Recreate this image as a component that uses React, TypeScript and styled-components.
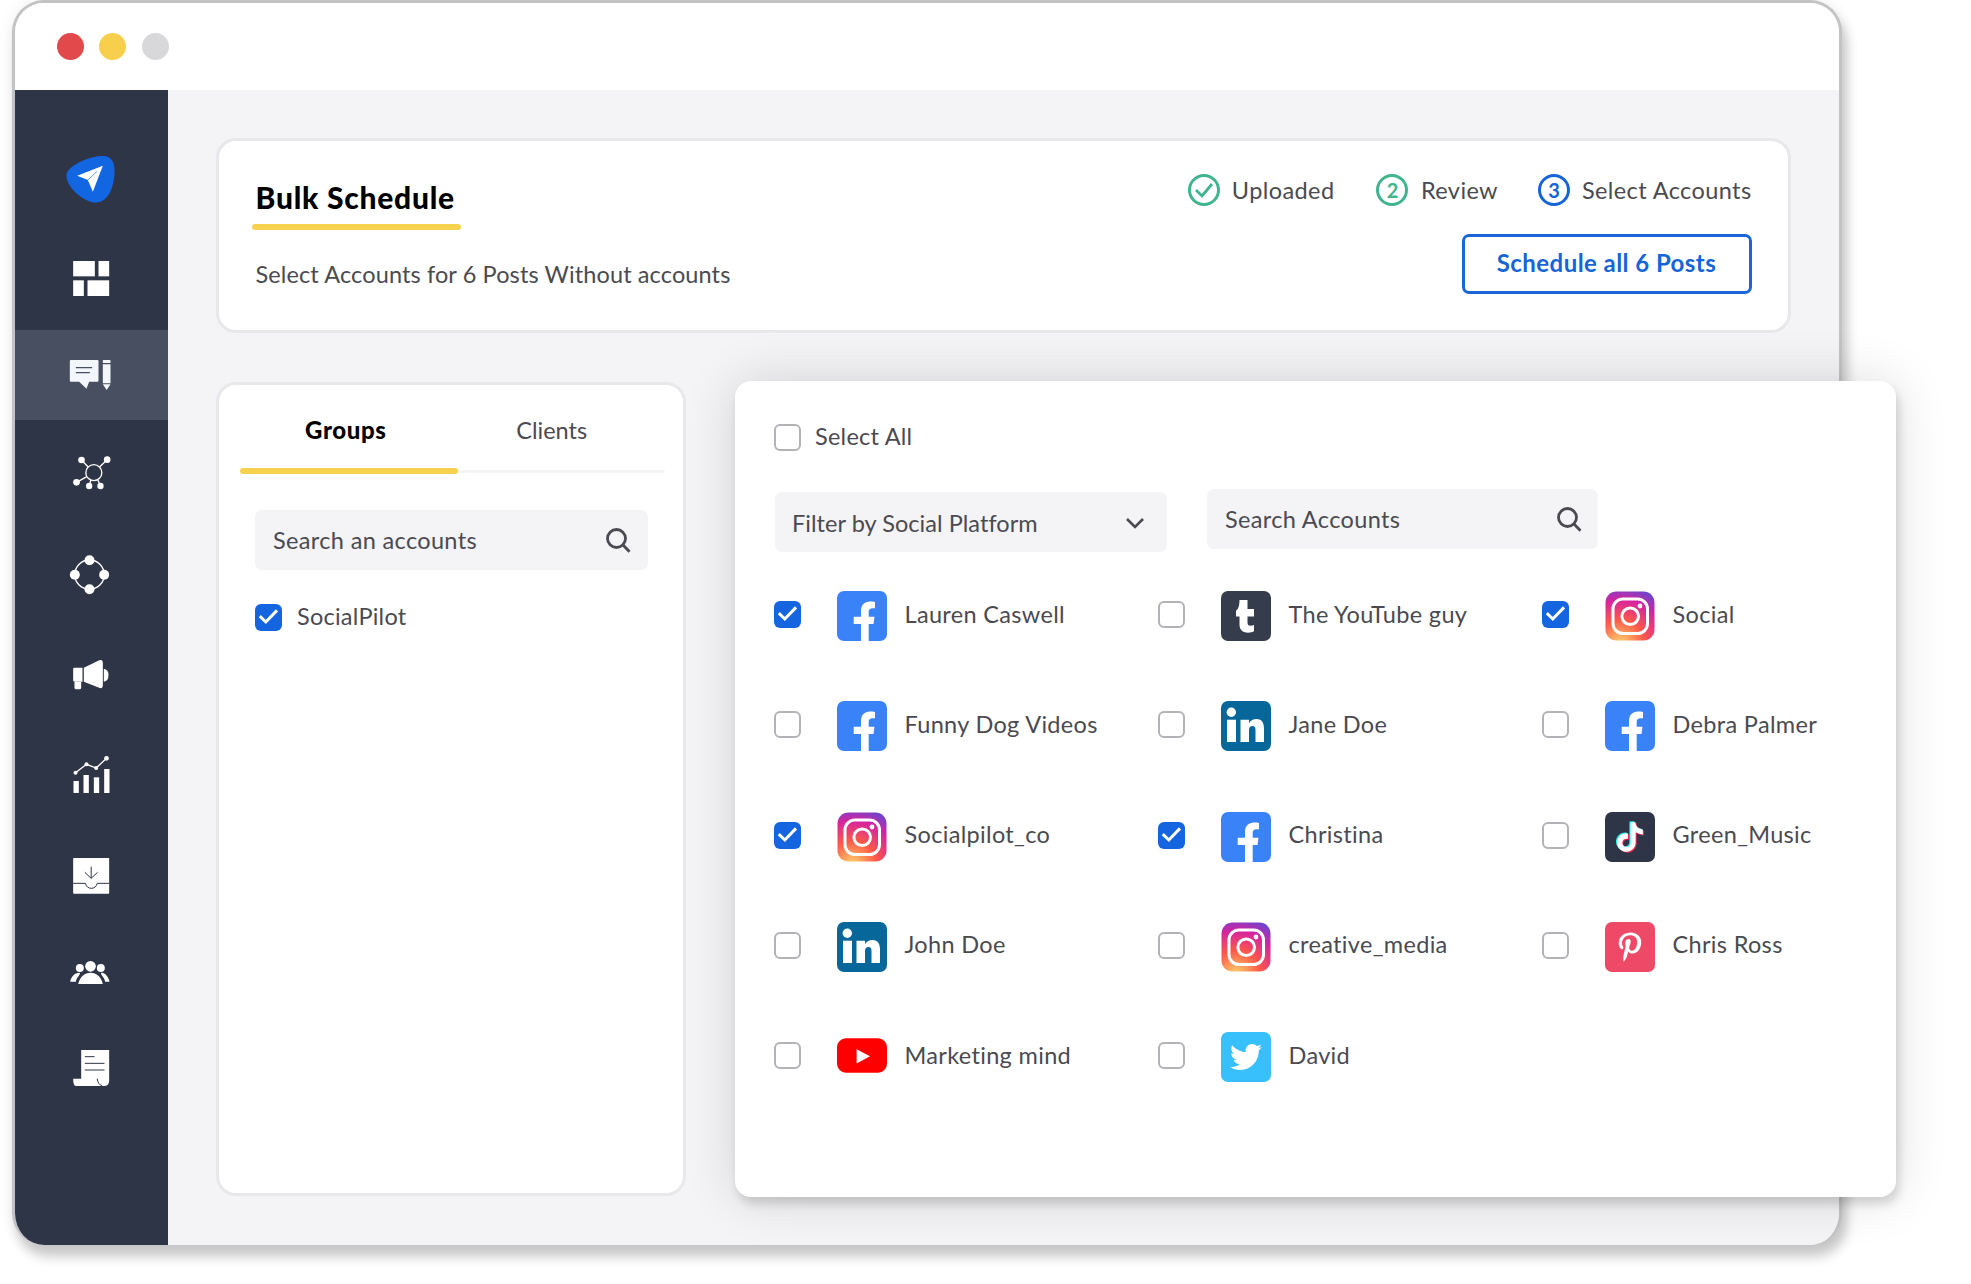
import React, { useId } from "react";
import styled, { createGlobalStyle } from "styled-components";
import { FaTwitter, FaPinterestP } from "react-icons/fa";

const Global = createGlobalStyle`
  html, body { margin: 0; padding: 0; background: #fff; }
  body { width: 1971px; height: 1284px; overflow: hidden; font-family: "Lato", "Liberation Sans", sans-serif; color: #4a4a50; }
  * { box-sizing: border-box; }
`;

const Stage = styled.div`
  position: relative;
  width: 1971px;
  height: 1284px;
  padding-left: 12px;
`;
const Win = styled.div`
  width: 1830px;
  height: 1245px;
  display: flex;
  flex-direction: column;
  border: 3px solid #c3c3c6;
  border-bottom: none;
  border-radius: 32px;
  background: #fff;
  overflow: hidden;
  box-shadow: 5px 12px 12px rgba(0, 0, 0, 0.2), 0 0 16px rgba(0, 0, 0, 0.07);
`;
const TitleBar = styled.div`
  height: 87px;
  flex: none;
  display: flex;
  align-items: center;
  gap: 15.5px;
  padding-left: 41.5px;
  background: #fff;
`;
const Dot = styled.span<{ $c: string }>`
  width: 27px;
  height: 27px;
  border-radius: 50%;
  background: ${(p) => p.$c};
`;
const Body = styled.div`
  flex: 1;
  display: flex;
  min-height: 0;
`;
const Sidebar = styled.nav`
  width: 153px;
  flex: none;
  padding-top: 42px;
  background: #2e3546;
`;
const NavItem = styled.div<{ $h: number; $active?: boolean }>`
  height: ${(p) => p.$h}px;
  display: flex;
  align-items: center;
  justify-content: center;
  background: ${(p) => (p.$active ? "#484f60" : "transparent")};
`;
const Main = styled.main`
  flex: 1;
  padding: 48px 0 0 48px;
  background: #f4f3f6;
`;
const Card = styled.section`
  background: #fff;
  border: 3px solid #e8e7ea;
  border-radius: 20px;
`;
const TopCard = styled(Card)`
  width: 1575px;
  height: 195px;
  display: flex;
  justify-content: space-between;
  padding: 0 36.5px 0 33px;
`;
const Heading = styled.div`
  padding-top: 39px;
  display: flex;
  flex-direction: column;
  align-items: flex-start;
`;
const Title = styled.h1`
  margin: 0;
  padding-left: 3.5px;
  font-size: 30px;
  line-height: 34px;
  font-weight: 900;
  letter-spacing: 0.75px;
  color: #000;
`;
const TitleRule = styled.div`
  width: 209px;
  height: 6px;
  margin-top: 10px;
  border-radius: 3px;
  background: #f6d24f;
`;
const Subtitle = styled.p`
  margin: 30px 0 0;
  padding-left: 3.5px;
  font-size: 23.5px;
  line-height: 28px;
  letter-spacing: 0.12px;
`;
const Actions = styled.div`
  padding-top: 32.5px;
  display: flex;
  flex-direction: column;
  align-items: flex-end;
`;
const Steps = styled.div`
  display: flex;
  align-items: center;
`;
const Step = styled.div<{ $gap: number; $ml: number }>`
  display: flex;
  align-items: center;
  gap: ${(p) => p.$gap}px;
  margin-left: ${(p) => p.$ml}px;
  font-size: 23.5px;
  line-height: 32px;
  letter-spacing: 0.4px;
`;
const StepBadge = styled.span<{ $c: string }>`
  width: 32px;
  height: 32px;
  display: flex;
  align-items: center;
  justify-content: center;
  border: 3px solid ${(p) => p.$c};
  border-radius: 50%;
  color: ${(p) => p.$c};
  font-size: 20px;
  font-weight: 700;
  line-height: 1;
  letter-spacing: 0;
`;
const PrimaryButton = styled.button`
  width: 290px;
  height: 60px;
  margin-top: 28px;
  padding: 0 0 3px;
  background: #fff;
  border: 3px solid #1a66d6;
  border-radius: 7px;
  color: #1565d8;
  font: 700 24px "Lato", "Liberation Sans", sans-serif;
  letter-spacing: 0.44px;
`;
const LeftCard = styled(Card)`
  width: 470px;
  height: 814px;
  margin-top: 49px;
  padding: 0 18px 0 21px;
`;
const Tabs = styled.div`
  display: grid;
  grid-template-columns: 217.5px 207.5px;
`;
const Tab = styled.div<{ $active?: boolean }>`
  display: flex;
  flex-direction: column;
  align-items: center;
  padding-top: 31px;
  font-size: ${(p) => (p.$active ? 24 : 23.5)}px;
  line-height: 28px;
  font-weight: ${(p) => (p.$active ? 900 : 400)};
  letter-spacing: ${(p) => (p.$active ? 0.6 : 0)}px;
  color: ${(p) => (p.$active ? "#000" : "#4a4a50")};
`;
const TabLabel = styled.span<{ $active?: boolean }>`
  height: 52px;
  padding-right: ${(p) => (p.$active ? 6 : 19)}px;
`;
const TabBar = styled.span<{ $active?: boolean }>`
  align-self: stretch;
  height: ${(p) => (p.$active ? 6 : 3)}px;
  margin: ${(p) => (p.$active ? "0" : "2px 0 1px")};
  border-radius: 3px;
  background: ${(p) => (p.$active ? "#f6d24f" : "#f5f5f6")};
`;
const FieldBox = styled.div<{ $w: number }>`
  width: ${(p) => p.$w}px;
  height: 60px;
  display: flex;
  align-items: center;
  justify-content: space-between;
  padding: 0 16px 0 18px;
  background: #f4f3f6;
  border-radius: 7px;
  font-size: 23.5px;
  letter-spacing: 0.35px;
`;
const LeftSearch = styled(FieldBox)`
  margin: 36px 0 34px 15px;
  padding-right: 17px;
`;
const CheckRow = styled.div<{ $ml?: number; $gap: number }>`
  display: flex;
  align-items: center;
  gap: ${(p) => p.$gap}px;
  margin-left: ${(p) => p.$ml || 0}px;
  font-size: 23.5px;
  line-height: 25px;
  letter-spacing: 0.25px;
`;
const CheckLabel = styled.span`
  padding-bottom: 2px;
`;
const Box = styled.span<{ $on?: boolean }>`
  width: 27px;
  height: 27px;
  flex: none;
  display: flex;
  align-items: center;
  justify-content: center;
  border-radius: 6px;
  background: ${(p) => (p.$on ? "#1565e0" : "#fff")};
  border: ${(p) => (p.$on ? "none" : "2px solid #b3b3b7")};
`;
const Panel = styled.section`
  position: absolute;
  left: 735px;
  top: 381px;
  width: 1161px;
  height: 816px;
  padding: 43px 0 0 39px;
  background: #fff;
  border-radius: 16px;
  box-shadow: 0 0 52px rgba(0, 0, 0, 0.14), 3px 7px 10px rgba(0, 0, 0, 0.14);
`;
const FilterRow = styled.div`
  display: flex;
  align-items: flex-start;
  gap: 40px;
  margin-top: 38px;
`;
const FilterBox = styled(FieldBox)`
  margin: 3px 0 0 1px;
  padding: 2px 22px 0 17px;
  letter-spacing: 0.05px;
`;
const AccountGrid = styled.div`
  display: grid;
  grid-template-columns: repeat(3, 384px);
  grid-auto-rows: 50px;
  row-gap: 60.25px;
  margin-top: 39px;
`;
const Account = styled.div`
  display: flex;
  align-items: center;
  font-size: 23.5px;
  letter-spacing: 0.33px;
`;
const AccountBox = styled(Box)`
  margin: 0 36px 3px 0;
`;
const Logo = styled.span<{ $bg: string }>`
  width: 50px;
  height: 50px;
  flex: none;
  display: flex;
  align-items: center;
  justify-content: center;
  border-radius: 7px;
  background: ${(p) => p.$bg};
  color: #fff;
  overflow: hidden;
`;
const LogoSvg = styled.svg`
  display: block;
  flex: none;
`;
const TubeSvg = styled(LogoSvg)`
  margin-bottom: 3px;
`;
const AccountName = styled.span`
  margin-left: 17.5px;
  padding-bottom: 5px;
`;

const Tick = () => (
  <svg width="27" height="27" viewBox="0 0 27 27" fill="none">
    <path d="M4.8 12.2 10.8 18 22 6.4" stroke="#fff" strokeWidth="3" />
  </svg>
);
const SearchIcon = () => (
  <svg width="26" height="26" viewBox="0 0 26 26" fill="none" stroke="#4a4a50" strokeWidth="2.8">
    <circle cx="11.5" cy="11.5" r="9" />
    <path d="M18 18 24.5 24.8" />
  </svg>
);
const Chevron = () => (
  <svg width="20" height="12" viewBox="0 0 20 12" fill="none" stroke="#4a4a50" strokeWidth="2.6">
    <path d="M2 2 10 10 18 2" />
  </svg>
);

const NavGlyph = ({ y, h, children }: { y: number; h: number; children: React.ReactNode }) => (
  <svg width="60" height={h / 3} viewBox={`184.5 ${y} 180 ${h}`}>
    {children}
  </svg>
);

const navItems: { h: number; active?: boolean; y: number; vh: number; node: React.ReactNode }[] = [
  {
    h: 95, y: 468, vh: 140,
    node: (
      <>
        <path d="M292 469C320 464 340 474 342 505 344 545 330 608 285 608 255 608 198 565 198 527 198 500 255 475 292 469Z" fill="#1366e2" />
        <path d="M307 497 230 527 262 540 277 575Z" fill="#fff" />
        <path d="M262 540 290 514" stroke="#1366e2" strokeWidth="2" />
      </>
    ),
  },
  {
    h: 103, y: 783, vh: 105,
    node: (
      <g fill="#fff">
        <rect x="218" y="783" width="65" height="46" />
        <rect x="294" y="783" width="32" height="46" />
        <rect x="218" y="841" width="32" height="47" />
        <rect x="261" y="841" width="65" height="47" />
      </g>
    ),
  },
  {
    h: 90, active: true, y: 1080, vh: 90,
    node: (
      <>
        <path d="M208 1083Q208 1080 211 1080H291Q294 1080 294 1083V1142Q294 1145 291 1145H266L258 1166 236 1145H211Q208 1145 208 1142Z" fill="#f3f6fb" />
        <path d="M226 1103H275M226 1118H268" stroke="#484f60" strokeWidth="4" />
        <path d="M307 1082Q307 1080 309 1080H328Q330 1080 330 1082V1089H307ZM307 1093H330V1150H307ZM307 1153H330L318.5 1170Z" fill="#f3f6fb" />
      </>
    ),
  },
  {
    h: 106, y: 105, vh: 110,
    node: (
      <g fill="#fff" stroke="#fff">
        <circle cx="280" cy="158" r="24" fill="none" strokeWidth="4" />
        <path d="M243 120 263 141M320 119 297 141M228 187 259 170M266 198 271 180M300 198 292 179" strokeWidth="4" />
        <g stroke="none">
          <circle cx="243" cy="120" r="10" />
          <circle cx="320" cy="119" r="10" />
          <circle cx="228" cy="187" r="10" />
          <circle cx="266" cy="198" r="9.5" />
          <circle cx="300" cy="198" r="9.5" />
        </g>
      </g>
    ),
  },
  {
    h: 98, y: 404, vh: 118,
    node: (
      <g fill="#fff">
        <circle cx="267" cy="463" r="44" fill="none" stroke="#fff" strokeWidth="4" />
        <circle cx="267" cy="420" r="15" />
        <circle cx="267" cy="507" r="15" />
        <circle cx="223" cy="463" r="15" />
        <circle cx="311" cy="463" r="15" />
      </g>
    ),
  },
  {
    h: 102, y: 720, vh: 90,
    node: (
      <g fill="#fff">
        <path d="M218 747Q218 743 222 743H246V785H222Q218 785 218 781Z" />
        <path d="M222 785H242V803Q242 808 237 808H227Q222 808 222 803Z" />
        <path d="M250 743 296 721Q307 717 307 730V795Q307 808 296 803L250 785Z" />
        <path d="M310 746Q324 748 324 765 324 783 310 785Z" />
      </g>
    ),
  },
  {
    h: 98, y: 1008, vh: 112,
    node: (
      <g fill="#fff">
        <rect x="219" y="1083" width="16" height="36" />
        <rect x="249" y="1065" width="16" height="54" />
        <rect x="280" y="1072" width="16" height="47" />
        <rect x="311" y="1047" width="16" height="72" />
        <path d="M225 1058 258 1033 287 1044 318 1015" fill="none" stroke="#fff" strokeWidth="4" />
        <circle cx="225" cy="1058" r="6" />
        <circle cx="258" cy="1033" r="6" />
        <circle cx="287" cy="1044" r="6" />
        <circle cx="318" cy="1015" r="7" />
      </g>
    ),
  },
  {
    h: 104, y: 54, vh: 108,
    node: (
      <>
        <path d="M218 56Q218 54 220 54H324Q326 54 326 56V159Q326 161 324 161H220Q218 161 218 159Z" fill="#fff" />
        <path d="M218 130H255C258 150 287 150 290 130H326" fill="none" stroke="#2e3546" strokeWidth="3" />
        <path d="M272 80V115M253 97 272 115 291 97" fill="none" stroke="#2e3546" strokeWidth="3" />
      </>
    ),
  },
  {
    h: 88, y: 360, vh: 73,
    node: (
      <g fill="#fff">
        <circle cx="270" cy="379" r="16" />
        <circle cx="238" cy="384" r="12" />
        <circle cx="301" cy="384" r="12" />
        <path d="M233 432C238 410 252 398 270 398 288 398 302 410 307 432Z" />
        <path d="M209 425C212 409 222 399 236 398 245 400 228 410 226 425Z" />
        <path d="M327 425C324 409 314 399 304 398 295 400 312 410 314 425Z" />
      </g>
    ),
  },
  {
    h: 104, y: 630, vh: 109,
    node: (
      <>
        <path d="M242 630H326V722Q326 738 310 738H226Q218 738 218 716H242Z" fill="#fff" />
        <path d="M253 650H282M253 670H312M253 690H312" stroke="#2e3546" strokeWidth="3" fill="none" />
        <path d="M290 716C292 728 296 735 305 737" stroke="#2e3546" strokeWidth="3" fill="none" />
      </>
    ),
  },
];

const FacebookLogo = () => (
  <Logo $bg="#3a82f7">
    <LogoSvg width="50" height="50" viewBox="0 0 50 50">
      <path d="M31.7 50V33H36.5L37.5 25.7H31.7V21C31.7 18.5 33 17.3 35.5 17.3H38V10.9C36.5 10.7 34.5 10.5 33 10.5 27.5 10.5 24 14 24 20V25.7H16.7V33H24V50Z" fill="#fff" />
    </LogoSvg>
  </Logo>
);
const InstagramLogo = () => {
  const id = "ig" + useId().replace(/[^a-zA-Z0-9]/g, "");
  return (
    <Logo $bg="transparent">
      <LogoSvg width="50" height="50" viewBox="0 0 50 50">
        <defs>
          <radialGradient id={id} cx="0.3" cy="1.07" r="1.5">
            <stop offset="0" stopColor="#fdf497" />
            <stop offset="0.05" stopColor="#fdc468" />
            <stop offset="0.33" stopColor="#fd5949" />
            <stop offset="0.6" stopColor="#d6249f" />
            <stop offset="0.9" stopColor="#285aeb" />
          </radialGradient>
        </defs>
        <rect x="0.5" y="0.5" width="49" height="49" rx="11" fill={`url(#${id})`} />
        <rect x="8" y="8" width="34.5" height="34.5" rx="10" fill="none" stroke="#fff" strokeWidth="3" />
        <circle cx="25.2" cy="25.2" r="8.3" fill="none" stroke="#fff" strokeWidth="3" />
        <circle cx="35" cy="15" r="2.4" fill="#fff" />
      </LogoSvg>
    </Logo>
  );
};
const TumblrLogo = () => (
  <Logo $bg="#353c4c">
    <LogoSvg width="50" height="50" viewBox="0 0 50 50">
      <path d="M18.5 9H26.5V18H33V25.5H26.5V31.5C26.5 33.8 27.5 34.8 29.5 34.8 30.8 34.8 32 34.5 33 34V40.3C31.5 41.2 29.5 41.7 27 41.7 21.5 41.7 18.5 38.5 18.5 33.5V25.5H15V19.5C17.5 18.5 18.5 14 18.5 9Z" fill="#fff" />
    </LogoSvg>
  </Logo>
);
const LinkedInLogo = () => (
  <Logo $bg="#08679a">
    <LogoSvg width="50" height="50" viewBox="0 0 50 50">
      <g fill="#fff">
        <circle cx="10.3" cy="11.3" r="4.7" />
        <rect x="6" y="18.7" width="9" height="22.3" />
        <path d="M19.5 18.7H28V22C29.5 19.5 32.5 18 35.5 18 41 18 43 22 43 27.5V41H34.5V29C34.5 26.5 33.5 25 31.5 25 29 25 28 27 28 29V41H19.5Z" />
      </g>
    </LogoSvg>
  </Logo>
);
const YouTubeLogo = () => (
  <Logo $bg="transparent">
    <TubeSvg width="50" height="35" viewBox="0 0 51 35">
      <rect width="51" height="35" rx="9" fill="#fe0000" />
      <path d="M20 11 33.7 18.3 20 25.7Z" fill="#fff" />
    </TubeSvg>
  </Logo>
);
const TwitterLogo = () => (
  <Logo $bg="#38c0fd">
    <FaTwitter size={32} />
  </Logo>
);
const PinterestLogo = () => (
  <Logo $bg="#ee4a68">
    <FaPinterestP size={30} />
  </Logo>
);
const tiktokPath =
  "M12.525.02c1.31-.02 2.61-.01 3.91-.02.08 1.53.63 3.09 1.75 4.17 1.12 1.11 2.7 1.62 4.24 1.79v4.03c-1.44-.05-2.89-.35-4.2-.97-.57-.26-1.1-.59-1.62-.93-.01 2.92.01 5.84-.02 8.75-.08 1.4-.54 2.79-1.35 3.94-1.31 1.92-3.58 3.17-5.91 3.21-1.43.08-2.86-.31-4.08-1.03-2.02-1.19-3.44-3.37-3.65-5.71-.02-.5-.03-1-.01-1.49.18-1.9 1.12-3.72 2.58-4.96 1.66-1.44 3.98-2.13 6.15-1.72.02 1.48-.04 2.96-.04 4.44-.99-.32-2.15-.23-3.02.37-.63.41-1.11 1.04-1.36 1.75-.21.51-.15 1.07-.14 1.61.24 1.64 1.82 3.02 3.5 2.87 1.12-.01 2.19-.66 2.77-1.61.19-.33.4-.67.41-1.06.1-1.79.06-3.57.07-5.36.01-4.03-.01-8.05.02-12.07z";
const TikTokLogo = () => (
  <Logo $bg="#2e3546">
    <LogoSvg width="32" height="32" viewBox="-1 -1 26 26">
      <path d={tiktokPath} fill="#25f4ee" transform="translate(-1 -0.7)" />
      <path d={tiktokPath} fill="#fe2c55" transform="translate(0.8 0.7)" />
      <path d={tiktokPath} fill="#fff" />
    </LogoSvg>
  </Logo>
);

type Acc = { name: string; on?: boolean; logo: React.ReactNode };
const accounts: Acc[] = [
  { name: "Lauren Caswell", on: true, logo: <FacebookLogo /> },
  { name: "The YouTube guy", logo: <TumblrLogo /> },
  { name: "Social", on: true, logo: <InstagramLogo /> },
  { name: "Funny Dog Videos", logo: <FacebookLogo /> },
  { name: "Jane Doe", logo: <LinkedInLogo /> },
  { name: "Debra Palmer", logo: <FacebookLogo /> },
  { name: "Socialpilot_co", on: true, logo: <InstagramLogo /> },
  { name: "Christina", on: true, logo: <FacebookLogo /> },
  { name: "Green_Music", logo: <TikTokLogo /> },
  { name: "John Doe", logo: <LinkedInLogo /> },
  { name: "creative_media", logo: <InstagramLogo /> },
  { name: "Chris Ross", logo: <PinterestLogo /> },
  { name: "Marketing mind", logo: <YouTubeLogo /> },
  { name: "David", logo: <TwitterLogo /> },
];

export default function App() {
  return (
    <Stage>
      <Global />
      <Win>
        <TitleBar>
          <Dot $c="#e2494b" />
          <Dot $c="#f8cf4d" />
          <Dot $c="#d8d7da" />
        </TitleBar>
        <Body>
          <Sidebar>
            {navItems.map((n, i) => (
              <NavItem key={i} $h={n.h} $active={n.active}>
                <NavGlyph y={n.y} h={n.vh}>
                  {n.node}
                </NavGlyph>
              </NavItem>
            ))}
          </Sidebar>
          <Main>
            <TopCard>
              <Heading>
                <Title>Bulk Schedule</Title>
                <TitleRule />
                <Subtitle>Select Accounts for 6 Posts Without accounts</Subtitle>
              </Heading>
              <Actions>
                <Steps>
                  <Step $gap={12} $ml={0}>
                    <StepBadge $c="#3fb58c">
                      <svg width="22" height="20" viewBox="0 0 22 20" fill="none">
                        <path d="M3 10 9 16 19 4" stroke="#3fb58c" strokeWidth="2.8" />
                      </svg>
                    </StepBadge>
                    Uploaded
                  </Step>
                  <Step $gap={12.5} $ml={42}>
                    <StepBadge $c="#3fb58c">2</StepBadge>
                    Review
                  </Step>
                  <Step $gap={12} $ml={40}>
                    <StepBadge $c="#1565d8">3</StepBadge>
                    Select Accounts
                  </Step>
                </Steps>
                <PrimaryButton>Schedule all 6 Posts</PrimaryButton>
              </Actions>
            </TopCard>
            <LeftCard>
              <Tabs>
                <Tab $active>
                  <TabLabel $active>Groups</TabLabel>
                  <TabBar $active />
                </Tab>
                <Tab>
                  <TabLabel>Clients</TabLabel>
                  <TabBar />
                </Tab>
              </Tabs>
              <LeftSearch $w={393}>
                Search an accounts
                <SearchIcon />
              </LeftSearch>
              <CheckRow $ml={15} $gap={15}>
                <Box $on>
                  <Tick />
                </Box>
                <CheckLabel>SocialPilot</CheckLabel>
              </CheckRow>
            </LeftCard>
          </Main>
        </Body>
      </Win>
      <Panel>
        <CheckRow $gap={14}>
          <Box />
          <CheckLabel>Select All</CheckLabel>
        </CheckRow>
        <FilterRow>
          <FilterBox $w={392}>
            Filter by Social Platform
            <Chevron />
          </FilterBox>
          <FieldBox $w={391}>
            Search Accounts
            <SearchIcon />
          </FieldBox>
        </FilterRow>
        <AccountGrid>
          {accounts.map((a) => (
            <Account key={a.name}>
              <AccountBox $on={a.on}>{a.on && <Tick />}</AccountBox>
              {a.logo}
              <AccountName>{a.name}</AccountName>
            </Account>
          ))}
        </AccountGrid>
      </Panel>
    </Stage>
  );
}
